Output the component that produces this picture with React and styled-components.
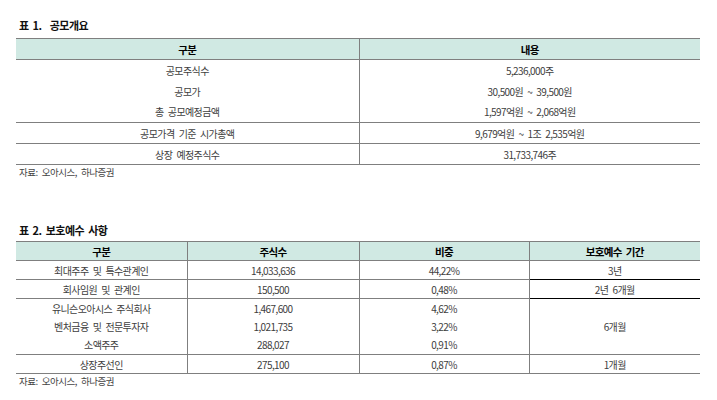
import React from "react";
import styled, { createGlobalStyle } from "styled-components";

const GlobalStyle = createGlobalStyle`
  body {
    margin: 0;
    background: #ffffff;
    font-family: "Noto Sans CJK KR", "Noto Sans", sans-serif;
  }
`;

const Page = styled.div`
  width: 684px;
  padding: 18px 17px 0 16px;
`;

const Section = styled.section`
  margin-top: ${(p) => p.$top || 0}px;
`;

const Title = styled.div`
  padding-left: 3px;
  font-size: 11px;
  line-height: 14px;
  font-weight: 700;
  color: #111;
  letter-spacing: -0.5px;
  word-spacing: 2px;
  white-space: pre;
  margin-bottom: ${(p) => p.$gap}px;
`;

const Table = styled.table`
  width: 684px;
  border-collapse: collapse;
  table-layout: fixed;
  border-top: 1px solid #7f7f7f;
  border-bottom: 1px solid #7f7f7f;
`;

const Row = styled.tr`
  height: ${(p) => p.$h}px;
`;

const Th = styled.th`
  padding: 0;
  background: #d0e9e3;
  color: #000;
  font-size: 10.5px;
  font-weight: 700;
  letter-spacing: -0.6px;
  word-spacing: 2px;
  text-align: center;
  border-bottom: 1px solid #7f7f7f;
  border-left: ${(p) => (p.$first ? "none" : "1px solid #7f7f7f")};
`;

const Td = styled.td`
  padding: 0;
  color: #404040;
  font-size: 10px;
  letter-spacing: -0.6px;
  word-spacing: 2.5px;
  text-align: center;
  vertical-align: middle;
  border-left: ${(p) => (p.$first ? "none" : "1px solid #7f7f7f")};
  border-bottom: ${(p) =>
    p.$line === "dark"
      ? "1px solid #000"
      : p.$line === "none"
      ? "none"
      : "1px solid #7f7f7f"};
`;

const Source = styled.div`
  padding-left: 3px;
  font-size: 9.5px;
  line-height: 14px;
  color: #444;
  letter-spacing: -0.5px;
  word-spacing: 2.5px;
`;

const offering = [
  ["공모주식수", "5,236,000주", "none"],
  ["공모가", "30,500원 ~ 39,500원", "none"],
  ["총 공모예정금액", "1,597억원 ~ 2,068억원"],
  ["공모가격 기준 시가총액", "9,679억원 ~ 1조 2,535억원"],
  ["상장 예정주식수", "31,733,746주"],
];

function App() {
  return (
    <>
      <GlobalStyle />
      <Page>
        <Section>
          <Title $gap={6}>{"표 1.  공모개요"}</Title>
          <Table>
            <colgroup>
              <col style={{ width: 343 }} />
              <col style={{ width: 341 }} />
            </colgroup>
            <thead>
              <Row $h={21}>
                <Th $first>구분</Th>
                <Th>내용</Th>
              </Row>
            </thead>
            <tbody>
              {offering.map(([label, value, line]) => (
                <Row $h={21} key={label}>
                  <Td $first $line={line}>
                    {label}
                  </Td>
                  <Td $line={line}>{value}</Td>
                </Row>
              ))}
            </tbody>
          </Table>
          <Source>자료: 오아시스, 하나증권</Source>
        </Section>

        <Section $top={44}>
          <Title $gap={4}>{"표 2. 보호예수 사항"}</Title>
          <Table>
            <colgroup>
              <col style={{ width: 171 }} />
              <col style={{ width: 172 }} />
              <col style={{ width: 170 }} />
              <col style={{ width: 171 }} />
            </colgroup>
            <thead>
              <Row $h={19}>
                <Th $first>구분</Th>
                <Th>주식수</Th>
                <Th>비중</Th>
                <Th>보호예수 기간</Th>
              </Row>
            </thead>
            <tbody>
              <Row $h={19}>
                <Td $first>최대주주 및 특수관계인</Td>
                <Td>14,033,636</Td>
                <Td>44,22%</Td>
                <Td $line="dark">3년</Td>
              </Row>
              <Row $h={19}>
                <Td $first>회사임원 및 관계인</Td>
                <Td>150,500</Td>
                <Td>0,48%</Td>
                <Td $line="dark">2년 6개월</Td>
              </Row>
              <Row $h={19}>
                <Td $first $line="none">
                  유니슨오아시스 주식회사
                </Td>
                <Td $line="none">1,467,600</Td>
                <Td $line="none">4,62%</Td>
                <Td rowSpan={3}>6개월</Td>
              </Row>
              <Row $h={18}>
                <Td $first $line="none">
                  벤처금융 및 전문투자자
                </Td>
                <Td $line="none">1,021,735</Td>
                <Td $line="none">3,22%</Td>
              </Row>
              <Row $h={19}>
                <Td $first>소액주주</Td>
                <Td>288,027</Td>
                <Td>0,91%</Td>
              </Row>
              <Row $h={19}>
                <Td $first $line="none">
                  상장주선인
                </Td>
                <Td $line="none">275,100</Td>
                <Td $line="none">0,87%</Td>
                <Td $line="none">1개월</Td>
              </Row>
            </tbody>
          </Table>
          <Source>자료: 오아시스, 하나증권</Source>
        </Section>
      </Page>
    </>
  );
}

export default App;
